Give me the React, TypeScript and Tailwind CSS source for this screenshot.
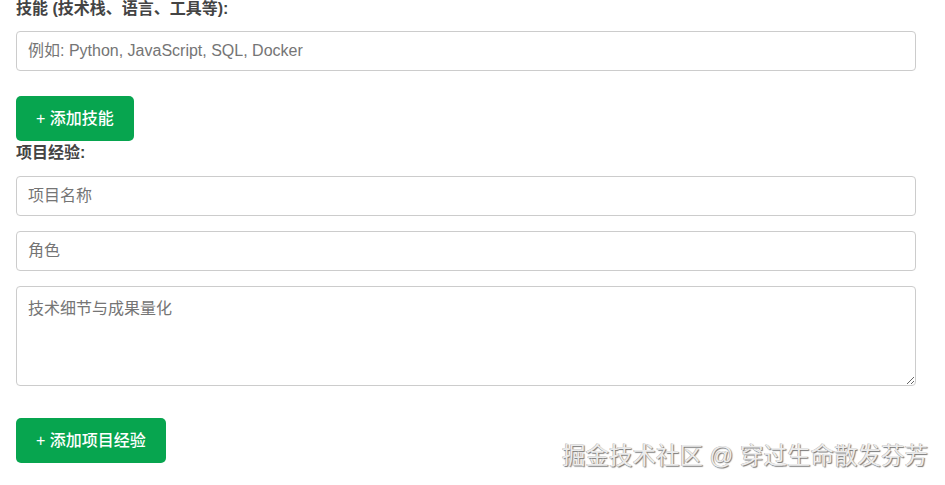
import React from 'react';

const font = { fontFamily: '"Liberation Sans", "Noto Sans CJK SC", sans-serif' };

function Field({ placeholder, className = '' }: { placeholder: string; className?: string }) {
  return (
    <input
      type="text"
      placeholder={placeholder}
      className={`block w-[900px] h-10 px-[11px] border border-[#cccccc] rounded-[4px] text-base text-[#333] placeholder:text-[#757575] bg-white outline-none ${className}`}
    />
  );
}

function AddButton({ children, className = '' }: { children: React.ReactNode; className?: string }) {
  return (
    <button
      type="button"
      className={`block h-[45px] px-5 rounded-[5px] bg-[#07a54f] text-white text-base font-medium ${className}`}
    >
      {children}
    </button>
  );
}

export default function App() {
  return (
    <div className="relative w-[945px] h-[485px] overflow-hidden bg-white" style={font}>
      <form className="px-4 -mt-[3px]">
        <label className="block text-base leading-6 font-bold text-[#444] mb-[10px]">
          技能 (技术栈、语言、工具等):
        </label>
        <Field placeholder="例如: Python, JavaScript, SQL, Docker" className="mb-[25px]" />
        <AddButton>+ 添加技能</AddButton>

        <label className="block text-base leading-6 font-bold text-[#444] mb-[11px]">项目经验:</label>
        <Field placeholder="项目名称" className="mb-[15px]" />
        <Field placeholder="角色" className="mb-[15px]" />
        <textarea
          placeholder="技术细节与成果量化"
          className="block w-[900px] h-[100px] px-[11px] py-[10px] border border-[#cccccc] rounded-[4px] text-base text-[#333] placeholder:text-[#757575] bg-white outline-none mb-8"
        />
        <AddButton>+ 添加项目经验</AddButton>
      </form>

      {/* watermark */}
      <div
        className="absolute right-[17px] bottom-[15px] text-[23.5px] leading-7 text-[#ececec] pointer-events-none"
        style={{ textShadow: '1px 1px 1px #777, -0.5px -0.5px 0 #aaa' }}
      >
        掘金技术社区 @ 穿过生命散发芬芳
      </div>
    </div>
  );
}
